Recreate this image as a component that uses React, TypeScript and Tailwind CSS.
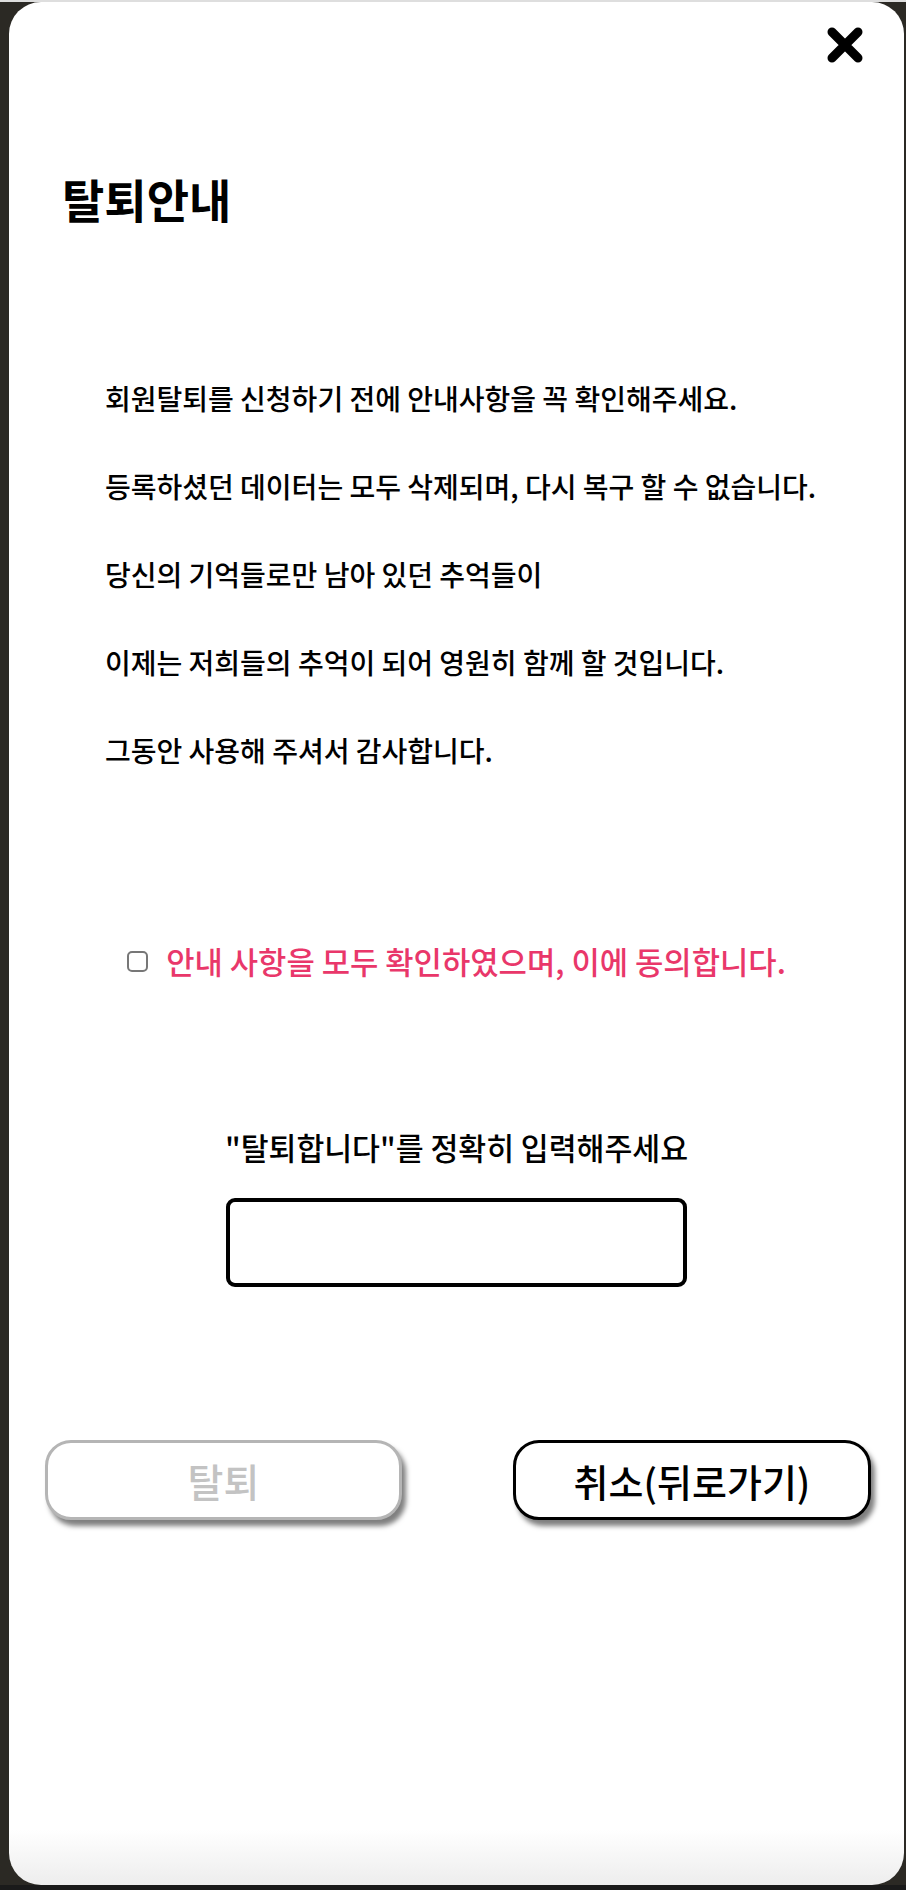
import { useState } from 'react'

const notices = [
  '회원탈퇴를 신청하기 전에 안내사항을 꼭 확인해주세요.',
  '등록하셨던 데이터는 모두 삭제되며, 다시 복구 할 수 없습니다.',
  '당신의 기억들로만 남아 있던 추억들이',
  '이제는 저희들의 추억이 되어 영원히 함께 할 것입니다.',
  '그동안 사용해 주셔서 감사합니다.',
]

export default function App() {
  const [agreed, setAgreed] = useState(false)
  const [confirmText, setConfirmText] = useState('')
  const canLeave = agreed && confirmText === '탈퇴합니다'

  return (
    <main className="w-[906px] h-[1890px] flex flex-col bg-[#2b2924] font-['Noto_Sans_CJK_KR',sans-serif] overflow-hidden">
      <div className="h-[2px] bg-[#dedede] shrink-0"></div>

      <div className="flex pl-[9px] pr-[2px] h-[1883px] shrink-0">
        {/* Modal */}
        <section className="relative flex-1 flex flex-col rounded-[32px] bg-[linear-gradient(to_bottom,#ffffff_calc(100%-55px),#ededed)] pt-[170px]">
          <button className="absolute top-[25px] right-[41px] w-[36px] h-[36px]" aria-label="닫기">
            <svg viewBox="0 0 36 36" className="w-full h-full">
              <path d="M5 5 L31 31 M31 5 L5 31" stroke="#000" strokeWidth="9" strokeLinecap="round" />
            </svg>
          </button>

          <h1 className="pl-[53px] text-[46px] leading-[52px] font-bold text-black">탈퇴안내</h1>

          {/* Notices */}
          <div className="mt-[154px] pl-[96px] flex flex-col gap-[48px]">
            {notices.map((line) => (
              <p key={line} className="text-[28px] leading-[40px] font-medium text-black whitespace-nowrap">
                {line}
              </p>
            ))}
          </div>

          {/* Agreement */}
          <label className="mt-[169px] h-[44px] flex items-center justify-center gap-[18px] cursor-pointer">
            <input
              type="checkbox"
              checked={agreed}
              onChange={(e) => setAgreed(e.target.checked)}
              className="appearance-none w-[21px] h-[21px] border-2 border-[#777777] rounded-[5px] bg-white checked:bg-[#e83a6a] checked:border-[#e83a6a]"
            />
            <span className="text-[30.8px] leading-[44px] font-medium text-[#e9376a] whitespace-nowrap">
              안내 사항을 모두 확인하였으며, 이에 동의합니다.
            </span>
          </label>

          {/* Confirm input */}
          <p className="mt-[144px] text-center text-[30.3px] leading-[40px] font-medium text-black">
            "탈퇴합니다"를 정확히 입력해주세요
          </p>
          <div className="mt-[31px] flex justify-center">
            <input
              type="text"
              value={confirmText}
              onChange={(e) => setConfirmText(e.target.value)}
              className="w-[461px] h-[89px] border-[4px] border-black rounded-[9px] px-4 text-[28px] outline-none"
            />
          </div>

          {/* Actions */}
          <div className="mt-[153px] flex justify-between pl-[36px] pr-[33px]">
            <button
              disabled={!canLeave}
              className={
                canLeave
                  ? 'w-[357px] h-[80px] rounded-[26px] border-[3px] border-black bg-white text-black text-[39px] font-medium shadow-[4px_6px_5px_rgba(0,0,0,0.5)]'
                  : 'w-[357px] h-[80px] rounded-[26px] border-[3px] border-[#b5b5b5] bg-white text-[#c3c3c3] text-[39px] font-medium shadow-[4px_6px_5px_rgba(0,0,0,0.5)]'
              }
            >
              탈퇴
            </button>
            <button className="w-[358px] h-[80px] rounded-[26px] border-[3px] border-black bg-white text-black text-[38px] font-medium shadow-[4px_6px_5px_rgba(0,0,0,0.5)]">
              취소(뒤로가기)
            </button>
          </div>
        </section>
      </div>

      <div className="flex-1 bg-[#1a1a1a]"></div>
    </main>
  )
}
